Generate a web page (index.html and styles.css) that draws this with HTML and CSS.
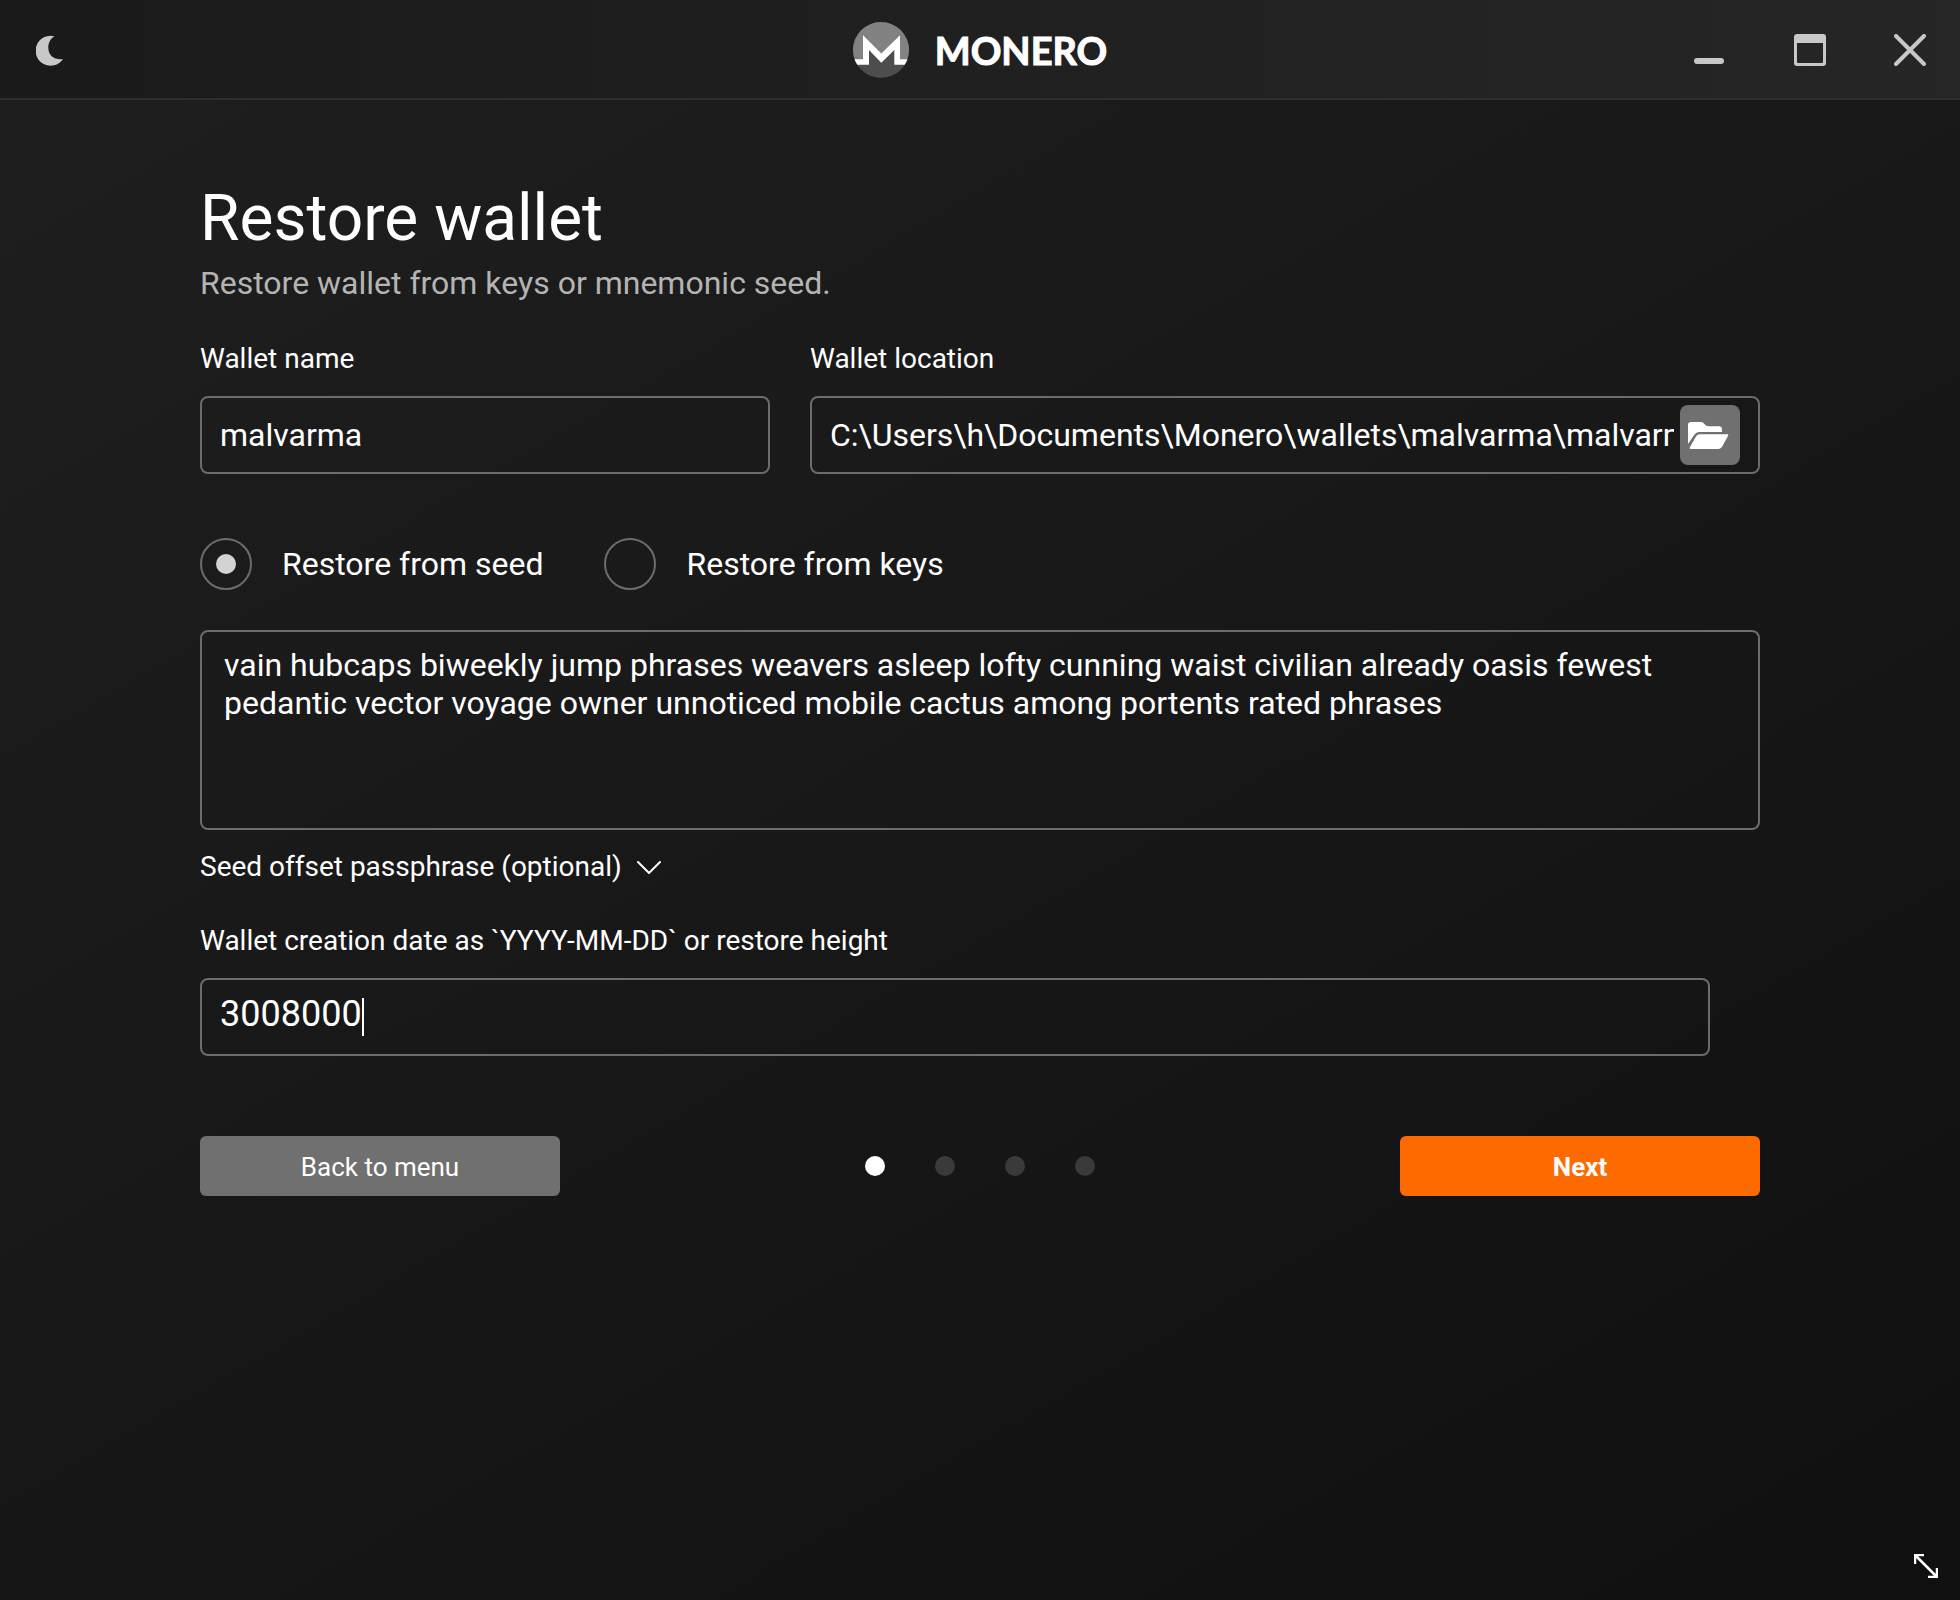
FILE: index.html
```html
<!DOCTYPE html>
<html lang="en">
<head>
<meta charset="utf-8">
<title>Monero – Restore wallet</title>
<link rel="stylesheet" href="styles.css">
</head>
<body>
<header class="titlebar">
  <button class="bar-button" type="button" aria-label="Toggle theme">
    <svg width="28" height="32" viewBox="0 0 28 32"><path d="M18.500 2.200A15 15 0 1 0 27 25.200C18 26 12.300 21.500 12.300 13.500C12.300 8.600 14.500 4.600 18.500 2.200Z" fill="#c8c8c8"/></svg>
  </button>
  <div class="brand">
    <svg width="56" height="56" viewBox="0 0 56 56" aria-hidden="true">
      <clipPath id="disc"><circle cx="28" cy="28" r="28"/></clipPath>
      <g clip-path="url(#disc)">
        <rect width="56" height="56" fill="#4d4d4d"/>
        <path d="M0 0H56V40H44V20L28 36L12 20V40H0Z" fill="#828282"/>
        <path d="M10 13.300L28.300 31.500L47 13.300V37.300H56V42.700H41.300V28L28.300 40.800L16 28V42.700H0V37.300H10Z" fill="#fff"/>
      </g>
    </svg>
    <span class="wordmark">MONERO</span>
  </div>
  <div class="window-controls">
    <button class="bar-button" type="button" aria-label="Minimize">
      <svg width="32" height="32" viewBox="0 0 32 32"><rect x="0" y="24" width="30" height="6" rx="3" fill="#c8c8c8"/></svg>
    </button>
    <button class="bar-button" type="button" aria-label="Maximize">
      <svg width="32" height="32" viewBox="0 0 32 32"><path d="M3 0H29a3 3 0 0 1 3 3V29a3 3 0 0 1-3 3H3a3 3 0 0 1-3-3V3a3 3 0 0 1 3-3ZM3 9V28a1 1 0 0 0 1 1H28a1 1 0 0 0 1-1V9Z" fill="#c8c8c8" fill-rule="evenodd"/></svg>
    </button>
    <button class="bar-button" type="button" aria-label="Close">
      <svg width="32" height="32" viewBox="0 0 32 32"><path d="M2 2L30 30M30 2L2 30" stroke="#c8c8c8" stroke-width="4" stroke-linecap="round"/></svg>
    </button>
  </div>
</header>

<main class="wizard">
  <h1 class="title">Restore wallet</h1>
  <p class="subtitle">Restore wallet from keys or mnemonic seed.</p>

  <form>
    <div class="wallet-fields">
      <div class="field">
        <label class="label" for="name">Wallet name</label>
        <div class="box"><input class="input" id="name" type="text" value="malvarma"></div>
      </div>
      <div class="field">
        <label class="label" for="location">Wallet location</label>
        <div class="box box-browse">
          <input class="input" id="location" type="text" value="C:\Users\h\Documents\Monero\wallets\malvarma\malvarma">
          <button class="browse" type="button" aria-label="Browse">
            <svg width="42" height="28" viewBox="0 0 42 28"><path d="M1 23V4Q1 1 4 1H14Q15.500 1 16.500 2L19 4.500Q20 5.300 21.500 5.300H32Q35 5.300 35 8.300V11H12Q9 11 7.500 13.500Z" fill="#fff"/><path d="M13 13.300H40.500Q42 13.300 41 15L35.500 25Q34 28 31 28H3.500Q2 28 3 26L9 15.500Q10.300 13.300 13 13.300Z" fill="#fff"/></svg>
          </button>
        </div>
      </div>
    </div>

    <div class="modes">
      <label class="mode"><input class="radio" type="radio" name="mode" checked>Restore from seed</label>
      <label class="mode"><input class="radio" type="radio" name="mode">Restore from keys</label>
    </div>

    <textarea class="seed" aria-label="Mnemonic seed" spellcheck="false">vain hubcaps biweekly jump phrases weavers asleep lofty cunning waist civilian already oasis fewest pedantic vector voyage owner unnoticed mobile cactus among portents rated phrases</textarea>

    <button class="disclosure" type="button">Seed offset passphrase (optional)
      <svg width="24" height="14" viewBox="0 0 24 14" aria-hidden="true"><path d="M1 2L12 13L23 2" fill="none" stroke="#fff" stroke-width="2" stroke-linecap="round"/></svg>
    </button>

    <div class="field restore-height">
      <label class="label" for="height">Wallet creation date as `YYYY-MM-DD` or restore height</label>
      <div class="box"><input class="input input-large" id="height" type="text" value="3008000"><span class="caret"></span></div>
    </div>

    <div class="actions">
      <button class="action" type="button">Back to menu</button>
      <div class="steps">
        <span class="step step-current"></span><span class="step"></span><span class="step"></span><span class="step"></span>
      </div>
      <button class="action action-primary" type="submit">Next</button>
    </div>
  </form>
</main>

<footer class="footer">
  <svg width="24" height="24" viewBox="0 0 24 24" aria-hidden="true"><path d="M2 2L22 22M1 10V1H10M14 23H23V14" fill="none" stroke="#fff" stroke-width="2.500"/></svg>
</footer>
</body>
</html>
```
FILE: styles.css
```css
* {
  box-sizing: border-box;
}

body {
  display: flex;
  flex-direction: column;
  min-height: 100vh;
  margin: 0;
  background: linear-gradient(150deg, #1f1f1f, #101010);
  color: #fff;
  font-family: Roboto, sans-serif;
}

button,
input,
textarea {
  margin: 0;
  padding: 0;
  border: 0;
  outline: 0;
  background: none;
  color: inherit;
  font-family: inherit;
}

svg {
  display: block;
  flex: none;
}

.titlebar {
  display: grid;
  grid-template-columns: 1fr auto 1fr;
  align-items: center;
  height: 100px;
  border-bottom: 2px solid #2f2f2f;
  background: linear-gradient(to right, #1a1a1a, #262626);
}

.bar-button {
  display: flex;
  align-items: center;
  justify-content: center;
  width: 100px;
  height: 98px;
  padding-top: 2px;
}

.brand {
  display: flex;
  align-items: center;
  gap: 26px;
  padding-top: 2px;
}

.wordmark {
  font: 700 38px/48px Lato, sans-serif;
  -webkit-text-stroke: 1px #fff;
}

.window-controls {
  display: flex;
  justify-content: flex-end;
}

.wizard {
  padding: 80px 200px 0;
}

.title {
  margin: 0 0 6px;
  font-size: 64px;
  font-weight: 400;
  line-height: 78px;
}

.subtitle {
  margin: 0 0 40px;
  color: #b4b4b4;
  font-size: 32px;
  line-height: 38px;
}

.wallet-fields {
  display: grid;
  grid-template-columns: 3fr 5fr;
  gap: 40px;
}

.field {
  display: flex;
  flex-direction: column;
  gap: 20px;
  min-width: 0;
}

.label {
  font-size: 28px;
  line-height: 34px;
}

.box {
  display: flex;
  align-items: center;
  height: 78px;
  padding: 0 18px;
  border: 2px solid #6c6c6c;
  border-radius: 8px;
}

.box-browse {
  gap: 6px;
}

.input {
  flex: 1;
  min-width: 0;
  font-size: 32px;
  line-height: 38px;
}

.input-large {
  flex: none;
  field-sizing: content;
  padding-bottom: 6px;
  caret-color: transparent;
  font-size: 36px;
  line-height: 42px;
}

.caret {
  width: 2px;
  height: 38px;
  background: #fff;
}

.browse {
  display: flex;
  align-items: center;
  width: 60px;
  height: 60px;
  padding-left: 7px;
  border-radius: 8px;
  background: #707070;
}

.modes {
  display: flex;
  gap: 61px;
  margin: 64px 0 40px;
}

.mode {
  display: flex;
  align-items: center;
  gap: 30px;
  font-size: 32px;
  line-height: 38px;
}

.radio {
  display: grid;
  place-items: center;
  width: 52px;
  height: 52px;
  border: 2px solid #6c6c6c;
  border-radius: 50%;
  appearance: none;
}

.radio:checked::before {
  width: 20px;
  height: 20px;
  border-radius: 50%;
  background: #d3d3d3;
  content: "";
}

.seed {
  display: block;
  width: 100%;
  height: 200px;
  padding: 14px 22px;
  border: 2px solid #6c6c6c;
  border-radius: 8px;
  font-size: 32px;
  line-height: 38px;
  resize: none;
}

.disclosure {
  display: flex;
  align-items: center;
  gap: 15px;
  margin: 20px 0 40px;
  font-size: 28px;
  line-height: 34px;
}

.restore-height {
  margin-right: 50px;
}

.actions {
  display: flex;
  align-items: center;
  justify-content: space-between;
  margin-top: 80px;
}

.action {
  width: 360px;
  height: 60px;
  padding-top: 2px;
  border-radius: 6px;
  background: #707070;
  font-size: 26px;
  line-height: 32px;
}

.action-primary {
  background: #fc6a00;
  font-weight: 700;
}

.steps {
  display: flex;
  gap: 50px;
}

.step {
  width: 20px;
  height: 20px;
  border-radius: 50%;
  background: #3a3a3a;
}

.step-current {
  background: #fff;
}

.footer {
  display: flex;
  justify-content: flex-end;
  margin-top: auto;
  padding: 22px;
}
```
